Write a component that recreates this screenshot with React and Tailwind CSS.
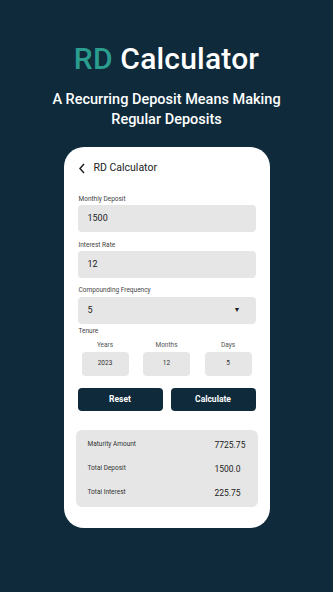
import React from 'react';

function Label({ children, className = '' }) {
  return <div className={`h-[7px] text-[6.5px] leading-[7px] text-[#444] pl-[1px] ${className}`}>{children}</div>;
}

function Tenure({ label, value }) {
  return (
    <div className="flex flex-col items-center">
      <div className="h-[7px] text-[6.5px] leading-[7px] text-[#555] mb-[3px]">{label}</div>
      <div className="w-[47px] h-[24px] rounded-[4px] bg-[#e6e6e6] flex items-center justify-center text-[6.5px] text-[#333]">{value}</div>
    </div>
  );
}

function Row({ label, value }) {
  return (
    <div className="grid grid-cols-[127px_1fr] items-center h-[24px]">
      <span className="text-[6.5px] text-[#333]">{label}</span>
      <span className="text-[8.5px] text-[#222]">{value}</span>
    </div>
  );
}

export default function App() {
  return (
    <div className="w-[333px] h-[592px] bg-[#0e2a3b] flex flex-col items-center overflow-hidden" style={{ fontFamily: 'Roboto, "Noto Sans", sans-serif' }}>
      <h1 className="mt-[41px] text-[30px] leading-[36px] font-medium tracking-[0.2px] text-white">
        <span className="text-[#2a9d8f]">RD</span> Calculator
      </h1>
      <p className="mt-[13px] text-center text-[14.5px] leading-[20px] font-medium text-white">
        A Recurring Deposit Means Making<br />Regular Deposits
      </p>
      <div className="mt-[17px] w-[206px] h-[381px] rounded-[20px] bg-white px-[14px] flex flex-col">
        <div className="flex items-center h-[24px] mt-[9px] mb-[16px]">
          <svg width="8" height="11" viewBox="0 0 8 11">
            <path d="M6 1 L2 5.5 L6 10" stroke="#222" strokeWidth="1.5" fill="none" />
          </svg>
          <span className="ml-[8px] text-[10.5px] text-[#222]">RD Calculator</span>
        </div>
        <Label>Monthly Deposit</Label>
        <div className="mt-[2px] h-[27px] rounded-[4px] bg-[#e6e6e6] flex items-center pl-[10px] text-[9px] text-[#222]">1500</div>
        <Label className="mt-[10px]">Interest Rate</Label>
        <div className="mt-[2px] h-[27px] rounded-[4px] bg-[#e6e6e6] flex items-center pl-[10px] text-[9px] text-[#222]">12</div>
        <Label className="mt-[9px]">Compounding Frequency</Label>
        <div className="mt-[3px] h-[27px] rounded-[4px] bg-[#e6e6e6] flex items-center justify-between pl-[10px] pr-[15px] text-[9px] text-[#222]">
          <span>5</span>
          <span className="text-[7px]">▼</span>
        </div>
        <Label className="mt-[4px]">Tenure</Label>
        <div className="mt-[7px] flex justify-between px-[4px]">
          <Tenure label="Years" value="2023" />
          <Tenure label="Months" value="12" />
          <Tenure label="Days" value="5" />
        </div>
        <div className="mt-[12px] flex gap-[8px]">
          <button className="flex-1 h-[23px] rounded-[4px] bg-[#0e2a3b] text-white text-[8.5px] font-bold">Reset</button>
          <button className="flex-1 h-[23px] rounded-[4px] bg-[#0e2a3b] text-white text-[8.5px] font-bold">Calculate</button>
        </div>
        <div className="mt-[19px] mx-[-2px] rounded-[6px] bg-[#e6e6e6] pl-[12px] pt-[3px] pb-[2px]">
          <Row label="Maturity Amount" value="7725.75" />
          <Row label="Total Deposit" value="1500.0" />
          <Row label="Total Interest" value="225.75" />
        </div>
      </div>
    </div>
  );
}
